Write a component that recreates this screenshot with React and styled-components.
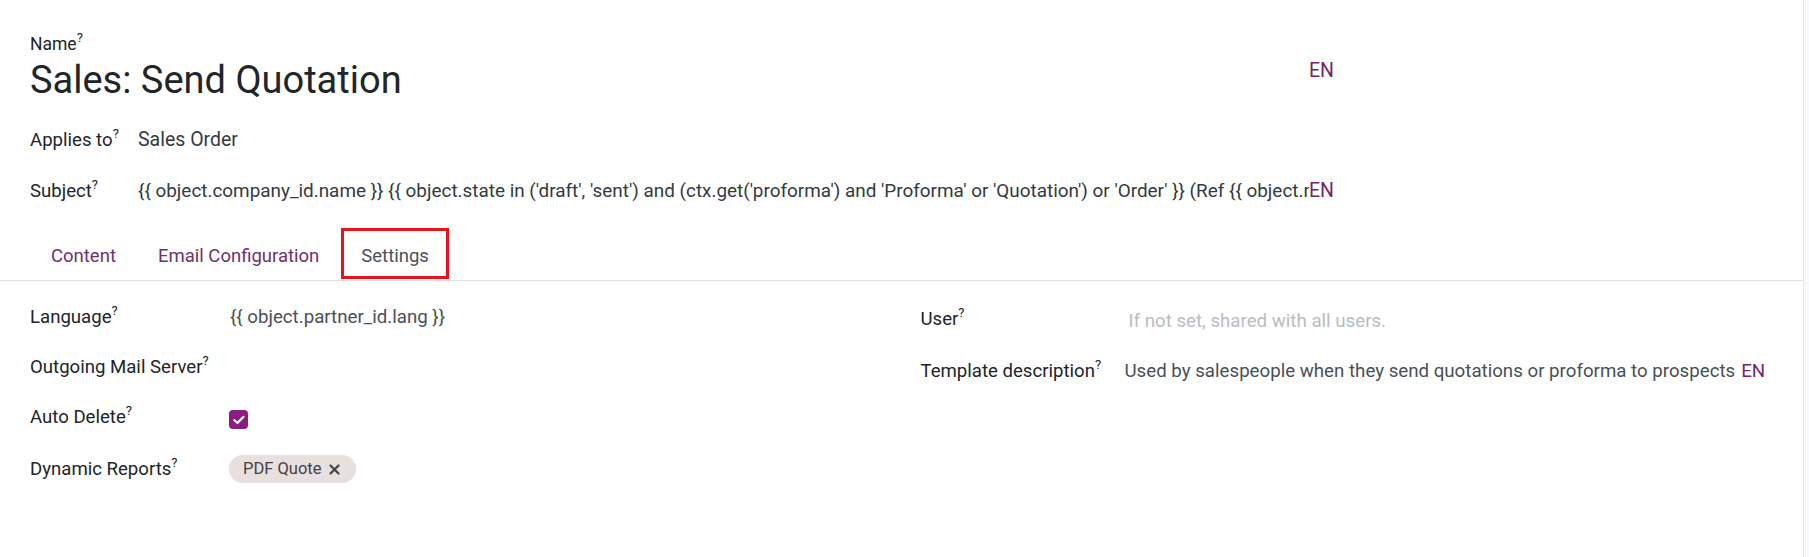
import React from "react";
import styled, { createGlobalStyle } from "styled-components";

const GlobalStyle = createGlobalStyle`
  html, body {
    margin: 0;
    padding: 0;
    background: #f9fafb;
  }
  body {
    font-family: Roboto, "Noto Sans", sans-serif;
    color: #212529;
  }
`;

const Sheet = styled.div`
  width: 1804px;
  height: 557px;
  background: #ffffff;
  border-right: 1px solid #e3e5e8;
  box-sizing: border-box;
`;

const Header = styled.div`
  padding: 34px 0 0 30px;
`;

const Help = styled.sup`
  font-size: 13px;
  line-height: 0;
  vertical-align: 8px;
`;

const NameLabel = styled.div`
  font-size: 17.5px;
  line-height: 20px;
  color: #212529;
`;

const TitleRow = styled.div`
  display: flex;
  align-items: flex-start;
  margin-top: 3px;
`;

const Title = styled.h1`
  flex: 0 0 1279px;
  margin: 0;
  font-size: 38px;
  line-height: 46px;
  font-weight: 400;
  color: #212529;
`;

const Lang = styled.span`
  font-size: ${(p) => p.$size || 19.5}px;
  line-height: 24px;
  color: #71266b;
  margin-top: ${(p) => p.$top || 0}px;
  margin-left: ${(p) => p.$gap || 0}px;
  flex: none;
`;

const FieldRow = styled.div`
  display: flex;
  align-items: center;
  margin-top: ${(p) => p.$top}px;
  line-height: 24px;
`;

const TopLabel = styled.div`
  flex: 0 0 108px;
  font-size: 18.6px;
  color: #212529;
`;

const TopValue = styled.div`
  flex: ${(p) => (p.$clip ? "0 0 1171px" : "none")};
  font-size: ${(p) => (p.$clip ? 18.9 : 19.5)}px;
  color: #343a40;
  white-space: nowrap;
  overflow: hidden;
`;

const TabNav = styled.div`
  display: flex;
  gap: 2px;
  margin-top: 25px;
  padding: 0 0 1px 31px;
  border-bottom: 1px solid #dee2e6;
`;

const Tab = styled.div`
  padding: 13px 17px 8px;
  font-size: 18.5px;
  line-height: 24px;
  border: 3px solid ${(p) => (p.$active ? "#e8121a" : "transparent")};
  color: ${(p) => (p.$active ? "#495057" : "#71306b")};
`;

const Settings = styled.div`
  display: grid;
  grid-template-columns: minmax(0, 1fr) minmax(0, 1fr);
  column-gap: 38px;
  padding: 24px 30px 0 30px;
  align-items: start;
`;

const Column = styled.div`
  display: flex;
  flex-direction: column;
  gap: 26px;
`;

const Row = styled.div`
  display: flex;
  align-items: center;
  min-height: 24px;
  line-height: 24px;
`;

const Label = styled.div`
  flex: 0 0 ${(p) => p.$width}px;
  font-size: 18.6px;
  color: #212529;
`;

const Value = styled.div`
  font-size: 18.7px;
  color: #495057;
  white-space: nowrap;
`;

const Placeholder = styled.div`
  padding: 4px 0 0 4px;
  font-size: 18.7px;
  color: #b9bdc3;
`;

const Check = styled.div`
  width: 19px;
  height: 19px;
  border-radius: 4px;
  background: #8a1c84;
  display: flex;
  align-items: center;
  justify-content: center;
  margin-top: 5px;
`;

const Tag = styled.div`
  display: inline-flex;
  align-items: center;
  gap: 8px;
  height: 28px;
  padding: 0 16px 0 14px;
  border-radius: 14px;
  background: #e8dfdf;
  color: #3f4246;
  font-size: 16.5px;
`;

const H = () => <Help>?</Help>;

export default function App() {
  return (
    <Sheet>
      <GlobalStyle />
      <Header>
        <NameLabel>
          Name<H />
        </NameLabel>
        <TitleRow>
          <Title>Sales: Send Quotation</Title>
          <Lang $top={2}>EN</Lang>
        </TitleRow>
        <FieldRow $top={25}>
          <TopLabel>
            Applies to<H />
          </TopLabel>
          <TopValue>Sales Order</TopValue>
        </FieldRow>
        <FieldRow $top={27}>
          <TopLabel>
            Subject<H />
          </TopLabel>
          <TopValue $clip>
            {"{{ object.company_id.name }} {{ object.state in ('draft', 'sent') and (ctx.get('proforma') and 'Proforma' or 'Quotation') or 'Order' }} (Ref {{ object.name or 'n/a' }})"}
          </TopValue>
          <Lang>EN</Lang>
        </FieldRow>
      </Header>

      <TabNav>
        <Tab>Content</Tab>
        <Tab>Email Configuration</Tab>
        <Tab $active>Settings</Tab>
      </TabNav>

      <Settings>
        <Column>
          <Row>
            <Label $width={200}>
              Language<H />
            </Label>
            <Value>{"{{ object.partner_id.lang }}"}</Value>
          </Row>
          <Row>
            <Label $width={200}>
              Outgoing Mail Server<H />
            </Label>
          </Row>
          <Row>
            <Label $width={199}>
              Auto Delete<H />
            </Label>
            <Check>
              <svg width="12" height="10" viewBox="0 0 12 10">
                <path
                  d="M1.5 5.2 L4.5 8 L10.5 1.8"
                  fill="none"
                  stroke="#ffffff"
                  strokeWidth="2.2"
                  strokeLinecap="round"
                  strokeLinejoin="round"
                />
              </svg>
            </Check>
          </Row>
          <Row>
            <Label $width={199}>
              Dynamic Reports<H />
            </Label>
            <Tag>
              PDF Quote
              <svg width="11" height="11" viewBox="0 0 11 11">
                <path
                  d="M1.5 1.5 L9.5 9.5 M9.5 1.5 L1.5 9.5"
                  stroke="#3f4246"
                  strokeWidth="2.2"
                  strokeLinecap="round"
                />
              </svg>
            </Tag>
          </Row>
        </Column>
        <Column>
          <Row>
            <Label $width={204}>
              User<H />
            </Label>
            <Placeholder>If not set, shared with all users.</Placeholder>
          </Row>
          <Row>
            <Label $width={204}>
              Template description<H />
            </Label>
            <Value>
              Used by salespeople when they send quotations or proforma to
              prospects
            </Value>
            <Lang $gap={6} $size={18.7}>
              EN
            </Lang>
          </Row>
        </Column>
      </Settings>
    </Sheet>
  );
}
